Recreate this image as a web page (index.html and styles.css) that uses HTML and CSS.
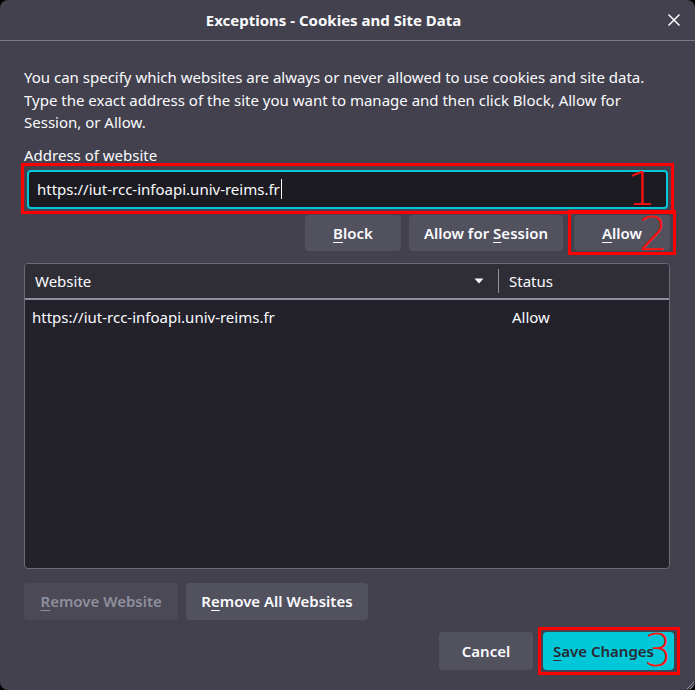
FILE: index.html
```html
<!DOCTYPE html>
<html>
<head>
<meta charset="utf-8">
<link rel="stylesheet" href="styles.css">
</head>
<body>
<div class="dialog">
  <div class="titlebar">
    <span class="title">Exceptions - Cookies and Site Data</span>
    <svg class="close" width="14" height="14" viewBox="0 0 14 14"><path d="M1.5 1.5 L12.5 12.5 M12.5 1.5 L1.5 12.5" stroke="#fbfbfe" stroke-width="1.5" fill="none"/></svg>
  </div>
  <div class="content">
    <p class="desc">You can specify which websites are always or never allowed to use cookies and site data. Type the exact address of the site you want to manage and then click Block, Allow for Session, or Allow.</p>
    <label class="label">Address of website</label>
    <div class="input-wrap">
      <div class="input"><span>https://iut-rcc-infoapi.univ-reims.fr</span><span class="caret"></span></div>
      <div class="annot annot1"><span class="num num1">1</span></div>
    </div>
    <div class="btn-row">
      <button class="btn"><u>B</u>lock</button>
      <button class="btn wide">Allow for <u>S</u>ession</button>
      <div class="allow-wrap">
        <button class="btn"><u>A</u>llow</button>
        <div class="annot annot2"><span class="num num2">2</span></div>
      </div>
    </div>
    <div class="table">
      <div class="thead">
        <div class="th th-site">Website <svg class="sort" width="10" height="6" viewBox="0 0 10 6"><path d="M0.5 0.5 L9.5 0.5 L5 5.5 Z" fill="#fbfbfe"/></svg></div>
        <div class="th th-status">Status</div>
      </div>
      <div class="tbody">
        <div class="tr">
          <div class="td td-site">https://iut-rcc-infoapi.univ-reims.fr</div>
          <div class="td td-status">Allow</div>
        </div>
      </div>
    </div>
    <div class="remove-row">
      <button class="btn disabled"><u>R</u>emove Website</button>
      <button class="btn remove-all">R<u>e</u>move All Websites</button>
    </div>
    <div class="footer">
      <button class="btn cancel">Cancel</button>
      <div class="save-wrap">
        <button class="btn primary"><u>S</u>ave Changes</button>
        <div class="annot annot3"><span class="num num3">3</span></div>
      </div>
    </div>
  </div>
  <svg class="grip" width="10" height="10" viewBox="0 0 10 10"><path d="M9 2 L2 9 M9 5 L5 9 M9 8 L8 9" stroke="#8f8f9d" stroke-width="1"/></svg>
</div>
</body>
</html>
```
FILE: styles.css
```css
html, body {
  margin: 0;
  padding: 0;
  background: #000;
}
body {
  width: 695px;
  height: 690px;
  overflow: hidden;
  font-family: "Noto Sans", "Open Sans", sans-serif;
  color: #fbfbfe;
  font-size: 15px;
}
.dialog {
  position: relative;
  width: 695px;
  height: 690px;
  background: #42414d;
  border-radius: 8px;
  display: flex;
  flex-direction: column;
  overflow: hidden;
}
.titlebar {
  height: 40px;
  border-bottom: 1px solid #7b7a85;
  display: flex;
  align-items: center;
  justify-content: center;
  position: relative;
  flex-shrink: 0;
}
.title {
  font-weight: 700;
  font-size: 15px;
  margin-left: -28px;
}
.close {
  position: absolute;
  right: 14px;
  top: 13px;
}
.content {
  padding: 0 24px 0 24px;
  display: flex;
  flex-direction: column;
  flex: 1;
}
.desc {
  margin: 25px 0 0 0;
  line-height: 22.5px;
  font-size: 15px;
}
.label {
  display: block;
  margin-top: 10px;
  line-height: 22px;
}
.input-wrap {
  position: relative;
  margin: 4px 3px 0 3px;
}
.input {
  height: 35px;
  border: 2px solid #00c8d8;
  border-radius: 4px;
  background: #1c1b22;
  display: flex;
  align-items: center;
  padding: 0 8px;
  font-size: 15px;
}
.caret {
  display: inline-block;
  width: 1px;
  height: 20px;
  background: #fbfbfe;
  margin-left: 1px;
}
.annot {
  position: absolute;
  border: 3px solid #ff0000;
  pointer-events: none;
}
.annot1 {
  left: -6px;
  right: -6px;
  top: -7px;
  bottom: -5px;
}
.num {
  position: absolute;
  color: #ff1010;
  font-family: "DejaVu Sans", sans-serif;
  font-weight: 200;
  font-size: 46px;
  line-height: 1;
}
.num1 {
  right: 15px;
  top: 0px;
}
.btn-row {
  display: flex;
  justify-content: flex-end;
  gap: 8px;
  margin-top: 6px;
  padding-right: 1px;
}
.btn {
  font-family: "Noto Sans", "Open Sans", sans-serif;
  font-size: 15px;
  font-weight: 600;
  color: #fbfbfe;
  background: #52515e;
  border: none;
  border-radius: 4px;
  height: 36px;
  min-width: 96px;
  padding: 0 15px;
  margin: 0;
}
.btn u {
  text-decoration-thickness: 1px;
  text-underline-offset: 3px;
}
.allow-wrap, .save-wrap {
  position: relative;
  display: flex;
  margin-left: 3px;
}
.annot2 {
  left: -6px;
  right: -6px;
  top: -5px;
  bottom: -4px;
}
.num2 {
  right: 5px;
  top: -2px;
}
.table {
  margin-top: 12px;
  height: 304px;
  border: 1px solid #6c6b75;
  border-radius: 4px;
  background: #23222b;
  overflow: hidden;
  display: flex;
  flex-direction: column;
  margin-right: 1px;
}
.thead {
  height: 34px;
  background: #2f2e37;
  border-bottom: 2px solid #8f8f9d;
  display: flex;
  align-items: center;
}
.th {
  line-height: 22px;
}
.th-site {
  width: 474px;
  padding-left: 10px;
  border-right: 1px solid #8f8f9d;
  height: 24px;
  display: flex;
  align-items: center;
  justify-content: space-between;
  padding-right: 14px;
  box-sizing: border-box;
}
.sort {
  margin-top: 1px;
}
.th-status {
  padding-left: 10px;
}
.tr {
  display: flex;
  height: 35px;
  align-items: center;
}
.td-site {
  width: 474px;
  padding-left: 7px;
  box-sizing: border-box;
}
.td-status {
  padding-left: 13px;
}
.remove-row {
  display: flex;
  gap: 8px;
  margin-top: 14px;
}
.remove-row .btn {
  height: 37px;
}
.disabled {
  background: #4a4955;
  color: #8f8f9d;
  padding: 0 16.5px;
}
.remove-all {
  padding: 0 15px;
}
.footer {
  display: flex;
  justify-content: flex-end;
  gap: 7px;
  margin-top: 12px;
  margin-right: -3px;
}
.footer .btn {
  height: 38px;
}
.cancel {
  width: 94px;
  min-width: 94px;
}
.primary {
  background: #00c8d8;
  color: #2b2a33;
  width: 131px;
  padding: 0 10px 0 0;
}
.annot3 {
  left: -5px;
  right: -6px;
  top: -5px;
  bottom: -5px;
}
.num3 {
  right: 5px;
  top: -1px;
  font-size: 44px;
}
.grip {
  position: absolute;
  right: 0;
  bottom: 0;
}
```
